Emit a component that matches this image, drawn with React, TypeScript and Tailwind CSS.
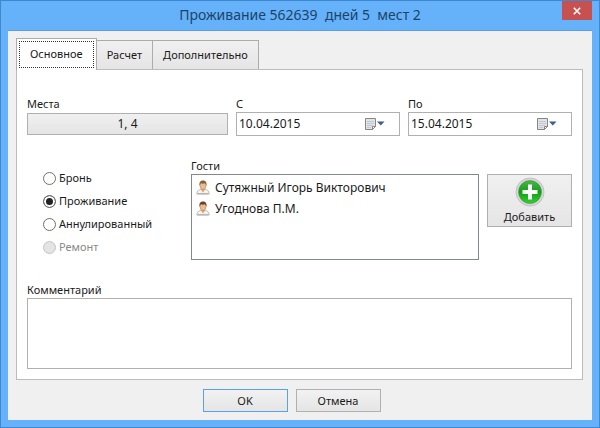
import { useState } from "react";

const TABS = ["Основное", "Расчет", "Дополнительно"];

const STATUSES = [
  { id: "booking",  label: "Бронь",          disabled: false },
  { id: "living",   label: "Проживание",     disabled: false },
  { id: "canceled", label: "Аннулированный", disabled: false },
  { id: "repair",   label: "Ремонт",         disabled: true },
];

const GUESTS = [
  { name: "Сутяжный Игорь Викторович", hair: "#8a5f38" },
  { name: "Угоднова П.М.",             hair: "#6f3d2a" },
];

function CalendarIcon() {
  return (
    <svg width="21" height="14" viewBox="0 0 21 14" aria-hidden="true">
      <path d="M1.500 1.500h10v8l-3 3h-7z" fill="#e0e3ea" stroke="#8b8580" strokeLinejoin="round" />
      <path d="M3 4.500h7M3 6.500h7M3 8.500h6M3 10.500h4" stroke="#c3c7d0" />
      <path d="M11.500 9.500h-3v3z" fill="#fff" stroke="#8b8580" strokeLinejoin="round" />
      <path d="M13 4.500h7.500l-3.750 4z" fill="#3d5f88" />
    </svg>
  );
}

function GuestIcon({ hair }: { hair: string }) {
  return (
    <svg width="14" height="15" viewBox="0 0 14 15" className="shrink-0" aria-hidden="true">
      <path d="M.8 14c0-3 1.800-4.200 4-4.600h4.400c2.200.4 4 1.600 4 4.600z" fill="#f4f3f1" stroke="#b5aea8" strokeWidth=".8" />
      <path d="M5 8.500h4v1.300L7 12.500 5 9.800z" fill="#dca878" />
      <ellipse cx="7" cy="5.600" rx="3" ry="4" fill="#e9bd8d" stroke="#a87848" strokeWidth=".5" />
      <path d="M3.600 6C2.900 2.200 4.600.5 7 .5s4.100 1.700 3.400 5.500C10 4.500 9.600 3.700 9 3.300c-1.300.5-2.800.5-4 0C4.400 3.700 4 4.500 3.600 6z" fill={hair} />
      <path d="M1.500 13.800h11" stroke="#a39b94" strokeWidth=".8" />
    </svg>
  );
}

function AddIcon() {
  return (
    <svg width="30" height="30" viewBox="0 0 30 30" aria-hidden="true">
      <defs>
        <linearGradient id="addFill" x1="0" y1="0" x2="0" y2="1">
          <stop offset="0" stopColor="#4fb34f" />
          <stop offset=".5" stopColor="#0fa112" />
          <stop offset="1" stopColor="#35cf35" />
        </linearGradient>
      </defs>
      <circle cx="15" cy="15" r="14" fill="#d9d5da" stroke="#bcb8bd" strokeWidth=".8" />
      <circle cx="15" cy="15" r="11.500" fill="url(#addFill)" stroke="#3c9a40" strokeWidth=".6" />
      <path d="M13 7.500h4v5.500h5.500v4H17v5.500h-4V17H7.500v-4H13z" fill="#fff" />
    </svg>
  );
}

function DateField({ id, label, value }: { id: string; label: string; value: string }) {
  return (
    <div>
      <label htmlFor={id} className="block">{label}</label>
      <div className="flex h-6 items-center border border-[#b0b0b0] bg-white pr-3.5">
        <input id={id} defaultValue={value} className="w-full min-w-0 flex-1 px-0.5 text-xs outline-none" />
        <button type="button" aria-label="Календарь" className="shrink-0"><CalendarIcon /></button>
      </div>
    </div>
  );
}

export default function App() {
  const [tab, setTab] = useState(0);
  const [status, setStatus] = useState("living");

  return (
    <div className="flex min-h-screen flex-col border border-[#3f88d0] bg-[#66b2fa] px-[7px] pb-[7px] font-['Noto_Sans','Open_Sans',sans-serif] text-[11px] leading-4 text-[#1a1a1a]">
      <header className="flex h-[29px] items-start">
        <div className="w-[30px]" />
        <h1 className="flex-1 pt-1 text-center text-sm leading-5 whitespace-pre text-[#1b4468]">Проживание 562639  дней 5  мест 2</h1>
        <button type="button" aria-label="Закрыть" className="flex h-[19px] w-[30px] items-center justify-center bg-[#c75050]">
          <svg width="8" height="8" viewBox="0 0 8 8" aria-hidden="true"><path d="M.8.8l6.400 6.400M7.200.8L.8 7.200" stroke="#fff" strokeWidth="1.600" /></svg>
        </button>
      </header>

      <main className="flex flex-1 flex-col border-t border-[#5a9fe0] bg-[#f0f0f0] pt-[7px] pr-[9px] pb-2 pl-2">
        <div role="tablist" className="flex items-end">
          {TABS.map((name, i) => (
            <button
              key={name}
              type="button"
              role="tab"
              aria-selected={tab === i}
              onClick={() => setTab(i)}
              className={tab === i
                ? "relative z-10 -mb-px h-8 border border-b-0 border-[#acacac] bg-white p-0.5"
                : "h-[29px] border border-b-0 border-l-0 border-[#acacac] bg-linear-to-b from-[#f0f0f0] to-[#e5e5e5] px-2.5"}
            >
              {tab === i
                ? <span className="block h-[27px] border border-dotted border-[#333] px-2.5 py-1">{name}</span>
                : name}
            </button>
          ))}
        </div>

        <section className="flex flex-1 flex-col border border-[#bcbcbc] bg-white px-2.5 pt-[26px] pb-2.5">
          <div className="grid grid-cols-[201fr_164fr_164fr] gap-2">
            <div>
              <label htmlFor="places" className="block">Места</label>
              <button id="places" type="button" className="mt-px block h-[22px] w-full border border-[#b0b0b0] bg-linear-to-b from-[#f0f0f0] to-[#e5e5e5] text-xs">1, 4</button>
            </div>
            <DateField id="from" label="С" value="10.04.2015" />
            <DateField id="to" label="По" value="15.04.2015" />
          </div>

          <div className="mt-[22px] flex">
            <fieldset className="flex w-[164px] shrink-0 flex-col gap-[7px] pt-3 pl-4">
              {STATUSES.map(s => (
                <label key={s.id} className={s.disabled ? "flex items-center gap-[3px] text-[#8a8a8a]" : "flex items-center gap-[3px]"}>
                  <input
                    type="radio"
                    name="status"
                    disabled={s.disabled}
                    checked={status === s.id}
                    onChange={() => setStatus(s.id)}
                    className="size-[13px] appearance-none rounded-full border border-[#707070] bg-white checked:bg-[#222] checked:shadow-[inset_0_0_0_2px_#fff] disabled:border-[#c4c4c4] disabled:bg-[#e4e4e4]"
                  />
                  {s.label}
                </label>
              ))}
            </fieldset>
            <div className="min-w-0 flex-1">
              <h2 id="guests">Гости</h2>
              <ul aria-labelledby="guests" className="h-[86px] border border-[#828790] bg-white px-1 py-0.5">
                {GUESTS.map(g => (
                  <li key={g.name} className="flex h-[21px] items-center gap-[5px] text-xs">
                    <GuestIcon hair={g.hair} />
                    {g.name}
                  </li>
                ))}
              </ul>
            </div>
            <button type="button" className="mt-4 ml-2 flex h-[53px] w-[85px] shrink-0 flex-col items-center gap-0.5 border border-[#b0b0b0] bg-linear-to-b from-[#f0f0f0] to-[#e5e5e5] pt-0.5">
              <AddIcon />
              Добавить
            </button>
          </div>

          <label htmlFor="comment" className="mt-[22px] block">Комментарий</label>
          <textarea id="comment" className="block min-h-[71px] w-full flex-1 resize-none border border-[#b0b0b0] bg-white p-1 outline-none" />
        </section>

        <footer className="mt-[9px] flex justify-center gap-2 pr-4">
          <button type="button" className="h-[23px] w-[85px] border border-[#5aa2e6] bg-linear-to-b from-[#f2f2f2] to-[#e5e5e5]">OK</button>
          <button type="button" className="h-[23px] w-[85px] border border-[#b0b0b0] bg-linear-to-b from-[#f2f2f2] to-[#e5e5e5]">Отмена</button>
        </footer>
      </main>
    </div>
  );
}
